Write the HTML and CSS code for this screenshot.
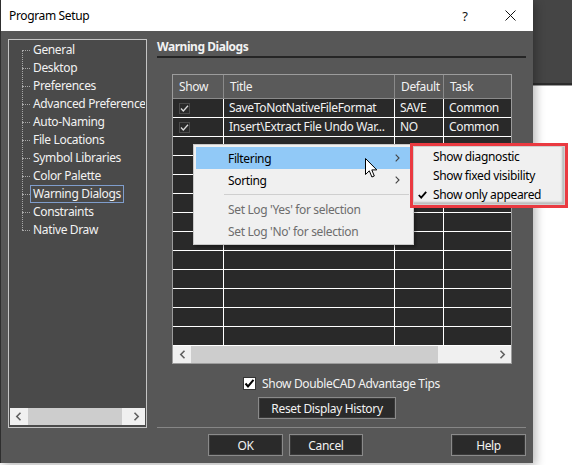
FILE: index.html
```html
<!DOCTYPE html>
<html>
<head>
<meta charset="utf-8">
<title>Program Setup</title>
<link rel="stylesheet" href="styles.css">
</head>
<body>
<div class="screen">
  <div class="dialog">
    <div class="titlebar">
      <span class="title">Program Setup</span>
      <span class="tb-help">?</span>
      <span class="tb-close"><svg width="11" height="11" viewBox="0 0 11 11"><path d="M0.5 0.5 L10.5 10.5 M10.5 0.5 L0.5 10.5" stroke="#111" stroke-width="1" fill="none"/></svg></span>
    </div>
    <div class="body">
      <div class="tree">
        <div class="tree-list">
          <div class="tree-item"><span class="lbl">General</span></div>
          <div class="tree-item"><span class="lbl">Desktop</span></div>
          <div class="tree-item"><span class="lbl">Preferences</span></div>
          <div class="tree-item"><span class="lbl">Advanced Preferences</span></div>
          <div class="tree-item"><span class="lbl">Auto-Naming</span></div>
          <div class="tree-item"><span class="lbl">File Locations</span></div>
          <div class="tree-item"><span class="lbl">Symbol Libraries</span></div>
          <div class="tree-item"><span class="lbl">Color Palette</span></div>
          <div class="tree-item"><span class="lbl focus">Warning Dialogs</span></div>
          <div class="tree-item"><span class="lbl">Constraints</span></div>
          <div class="tree-item"><span class="lbl">Native Draw</span></div>
        </div>
        <div class="hscroll tree-scroll">
          <span class="arrow"><svg width="7" height="9" viewBox="0 0 7 9"><path d="M5.5 0.8 L1.8 4.5 L5.5 8.2" stroke="#606060" stroke-width="1.6" fill="none"/></svg></span>
          <span class="thumb"></span>
          <span class="track"></span>
          <span class="arrow"><svg width="7" height="9" viewBox="0 0 7 9"><path d="M1.5 0.8 L5.2 4.5 L1.5 8.2" stroke="#606060" stroke-width="1.6" fill="none"/></svg></span>
        </div>
      </div>

      <div class="page">
        <div class="page-title">Warning Dialogs</div>
        <div class="grid">
          <div class="grid-head">
            <div class="c c-show">Show</div>
            <div class="c c-title">Title</div>
            <div class="c c-def">Default</div>
            <div class="c c-task">Task</div>
          </div>
          <div class="grid-body">
            <div class="row">
              <div class="c c-show"><svg class="chk" width="11" height="11" viewBox="0 0 11 11"><rect x="0.5" y="0.5" width="10" height="10" fill="none" stroke="#4a4a4a"/><path d="M2 5.5 L4.3 8 L9 2.8" stroke="#d8d8d8" stroke-width="1.3" fill="none"/></svg></div>
              <div class="c c-title">SaveToNotNativeFileFormat</div>
              <div class="c c-def">SAVE</div>
              <div class="c c-task">Common</div>
            </div>
            <div class="row">
              <div class="c c-show"><svg class="chk" width="11" height="11" viewBox="0 0 11 11"><rect x="0.5" y="0.5" width="10" height="10" fill="none" stroke="#4a4a4a"/><path d="M2 5.5 L4.3 8 L9 2.8" stroke="#d8d8d8" stroke-width="1.3" fill="none"/></svg></div>
              <div class="c c-title">Insert\Extract File Undo War...</div>
              <div class="c c-def">NO</div>
              <div class="c c-task">Common</div>
            </div>
            <div class="row"><div class="c c-show"></div><div class="c c-title"></div><div class="c c-def"></div><div class="c c-task"></div></div>
            <div class="row"><div class="c c-show"></div><div class="c c-title"></div><div class="c c-def"></div><div class="c c-task"></div></div>
            <div class="row"><div class="c c-show"></div><div class="c c-title"></div><div class="c c-def"></div><div class="c c-task"></div></div>
            <div class="row"><div class="c c-show"></div><div class="c c-title"></div><div class="c c-def"></div><div class="c c-task"></div></div>
            <div class="row"><div class="c c-show"></div><div class="c c-title"></div><div class="c c-def"></div><div class="c c-task"></div></div>
            <div class="row"><div class="c c-show"></div><div class="c c-title"></div><div class="c c-def"></div><div class="c c-task"></div></div>
            <div class="row"><div class="c c-show"></div><div class="c c-title"></div><div class="c c-def"></div><div class="c c-task"></div></div>
            <div class="row"><div class="c c-show"></div><div class="c c-title"></div><div class="c c-def"></div><div class="c c-task"></div></div>
            <div class="row"><div class="c c-show"></div><div class="c c-title"></div><div class="c c-def"></div><div class="c c-task"></div></div>
            <div class="row"><div class="c c-show"></div><div class="c c-title"></div><div class="c c-def"></div><div class="c c-task"></div></div>
            <div class="row"><div class="c c-show"></div><div class="c c-title"></div><div class="c c-def"></div><div class="c c-task"></div></div>
          </div>
          <div class="hscroll grid-scroll">
            <span class="arrow"><svg width="7" height="9" viewBox="0 0 7 9"><path d="M5.5 0.8 L1.8 4.5 L5.5 8.2" stroke="#606060" stroke-width="1.6" fill="none"/></svg></span>
            <span class="thumb"></span>
            <span class="track"></span>
            <span class="arrow"><svg width="7" height="9" viewBox="0 0 7 9"><path d="M1.5 0.8 L5.2 4.5 L1.5 8.2" stroke="#606060" stroke-width="1.6" fill="none"/></svg></span>
          </div>
        </div>

        <div class="tips">
          <span class="cb"><svg width="11" height="11" viewBox="0 0 11 11"><path d="M1.5 5.5 L4 8.5 L9.5 1.8" stroke="#000" stroke-width="2" fill="none"/></svg></span>
          <span>Show DoubleCAD Advantage Tips</span>
        </div>
        <div class="btn reset">Reset Display History</div>
        <div class="sep"></div>
        <div class="buttons">
          <div class="btn ok">OK</div>
          <div class="btn cancel">Cancel</div>
          <div class="btn help">Help</div>
        </div>
      </div>
    </div>
  </div>

  <div class="behind">
    <div class="behind-bar"></div>
  </div>

  <div class="ctx">
    <div class="mi hot"><span>Filtering</span><svg class="sub" width="5" height="8" viewBox="0 0 5 8"><path d="M0.7 0.7 L4 4 L0.7 7.3" stroke="#444" stroke-width="1.1" fill="none"/></svg></div>
    <div class="mi"><span>Sorting</span><svg class="sub" width="5" height="8" viewBox="0 0 5 8"><path d="M0.7 0.7 L4 4 L0.7 7.3" stroke="#444" stroke-width="1.1" fill="none"/></svg></div>
    <div class="msep"></div>
    <div class="mi dis"><span>Set Log 'Yes' for selection</span></div>
    <div class="mi dis"><span>Set Log 'No' for selection</span></div>
  </div>

  <div class="mark">
    <div class="submenu">
      <div class="si"><span class="tick"></span><span>Show diagnostic</span></div>
      <div class="si"><span class="tick"></span><span>Show fixed visibility</span></div>
      <div class="si"><span class="tick"><svg width="9" height="8" viewBox="0 0 9 8"><path d="M0.8 4 L3.2 6.6 L8.2 0.8" stroke="#000" stroke-width="1.8" fill="none"/></svg></span><span>Show only appeared</span></div>
    </div>
  </div>

  <svg class="cursor" width="13" height="21" viewBox="0 0 13 21"><path d="M0.5 0.5 L0.5 16.5 L4.3 12.8 L6.9 19 L9.3 18 L6.8 11.9 L11.8 11.9 Z" fill="#fff" stroke="#000" stroke-width="1" stroke-linejoin="miter"/></svg>
</div>
</body>
</html>
```

FILE: styles.css
```css
* { box-sizing: border-box; margin: 0; padding: 0; }
html, body { width: 572px; height: 465px; overflow: hidden; background: #fff; }
body {
  font-family: "Noto Sans", "DejaVu Sans", sans-serif;
  font-size: 12px;
  letter-spacing: -0.35px;
  color: #f2f2f2;
}
.screen { position: relative; width: 572px; height: 465px; display: flex; align-items: flex-start; }

/* dialog */
.dialog {
  width: 533px; height: 463px; flex: none;
  display: flex; flex-direction: column;
  background: #575757;
  border-left: 1px solid #2e2e2e;
  box-shadow: 3px 3px 9px rgba(0,0,0,0.28);
  position: relative; z-index: 1;
}
.titlebar {
  height: 31px; flex: none; background: #fff; color: #000;
  display: flex; align-items: center; padding-left: 8px;
}
.title { flex: 1; font-size: 12px; }
.tb-help { width: 46px; text-align: center; font-size: 13px; color: #111; }
.tb-close { width: 45px; display: flex; justify-content: center; align-items: center; }

.body { flex: 1; display: flex; gap: 10px; padding: 8px 7px 0 7px; }

/* tree */
.tree {
  width: 139px; height: 389px; flex: none;
  background: #4a4a4a;
  border: 1px solid #c4c4c4;
  padding: 1px 1px 2px 1px;
  display: flex; flex-direction: column;
}
.tree-list { flex: 1; position: relative; margin-left: 12px; overflow: hidden; }
.tree-list::before {
  content: ""; position: absolute; left: 0; top: 9px; height: 180px;
  border-left: 1px dotted #a8a8a8;
}
.tree-item { height: 18px; display: flex; align-items: center; white-space: nowrap; }
.tree-item::before {
  content: ""; width: 8px; flex: none; border-top: 1px dotted #a8a8a8;
}
.lbl { height: 18px; line-height: 16px; padding: 0 2px; border: 1px solid transparent; }
.lbl.focus { border-color: #7f9dcc; }

/* scrollbars */
.hscroll { height: 17px; flex: none; display: flex; background: #f0f0f0; }
.hscroll .arrow { width: 18px; display: flex; align-items: center; justify-content: center; }
.hscroll .thumb { background: #cdcdcd; }
.hscroll .track { flex: 1; }
.tree-scroll .thumb { width: 95px; }
.tree-scroll .track { flex: 0 0 5px; }
.grid-scroll .thumb { width: 247px; }

/* page */
.page { width: 369px; flex: none; display: flex; flex-direction: column; }
.page-title {
  height: 19px; line-height: 16px; font-weight: bold; letter-spacing: -0.45px;
  border-bottom: 2px solid #252525;
}
.grid {
  margin: 16px 0 0 15px; width: 340px; height: 290px;
  border: 1px solid #9c9c9c; background: #292929;
  display: flex; flex-direction: column;
}
.grid-head { height: 24px; flex: none; display: flex; background: #5a5a5a; border-bottom: 1px solid #8a8a8a; }
.grid-head .c { border-right: 1px solid #8a8a8a; line-height: 23px; padding-left: 6px; }
.grid-head .c-task { border-right: none; }
.c { flex: none; white-space: nowrap; overflow: hidden; }
.c-show { width: 51px; }
.c-title { width: 171px; }
.c-def { width: 49px; }
.c-task { width: 67px; }
.grid-body { height: 247px; flex: none; overflow: hidden; }
.row { height: 19px; display: flex; border-bottom: 1px solid #fff; }
.row .c { border-right: 1px solid #fff; line-height: 18px; padding-left: 5px; }
.row .c-task { border-right: none; padding-left: 5px; }
.row .c-show { padding-left: 6px; display: flex; align-items: center; }

.tips {
  margin-top: 13px; height: 13px;
  display: flex; justify-content: center; align-items: center; gap: 6px;
}
.cb {
  width: 13px; height: 13px; background: #fff; border: 1px solid #333;
  display: flex; align-items: center; justify-content: center;
}
.btn {
  height: 22px; background: #2a2a2a; color: #f2f2f2;
  border: 1px solid #8a8a8a; box-shadow: inset 0 0 0 1px #3a3a3a;
  display: flex; align-items: center; justify-content: center;
}
.reset { margin: 7px 0 0 101px; width: 138px; }
.sep { margin-top: 8px; height: 1px; background: #868686; flex: none; }
.buttons { margin-top: 6px; display: flex; }
.ok { width: 75px; margin-left: 51px; }
.cancel { width: 74px; margin-left: 6px; }
.help { width: 75px; margin-left: auto; }

/* stuff behind the dialog */
.behind { flex: 1; height: 465px; background: #fff; }
.behind-bar { height: 85px; background: #454545; border-bottom: 2px solid #2c2c2c; box-shadow: 0 1px 0 #9a9a9a; }

/* context menu */
.ctx {
  position: absolute; left: 193px; top: 144px; z-index: 5;
  width: 221px; background: #f0f0f0; color: #000;
  border: 1px solid #c9c9c9; padding: 2px;
  box-shadow: 2px 2px 3px rgba(0,0,0,0.35);
}
.mi { height: 22px; display: flex; align-items: center; padding-left: 32px; padding-right: 11px; }
.mi span:first-child { flex: 1; }
.mi.hot { background: #91c9f7; }
.mi.dis { color: #6d6d6d; }
.msep { height: 7px; margin-left: 28px; margin-right: 2px; display: flex; align-items: center; }
.msep::before { content: ""; flex: 1; height: 1px; background: #cfcfcf; }

/* highlighted submenu */
.mark {
  position: absolute; left: 410px; top: 143px; z-index: 6;
  border: 3px solid #ea3a41;
}
.submenu {
  width: 152px; background: #f0f0f0; color: #000;
  box-shadow: inset -3px -3px 2px -1px rgba(0,0,0,0.22);
  border: 1px solid #d0d0d0;
}
.si { height: 19px; display: flex; align-items: center; }
.tick { width: 19px; padding-left: 4px; display: flex; align-items: center; }

.cursor { position: absolute; left: 365px; top: 158px; z-index: 7; }
```
